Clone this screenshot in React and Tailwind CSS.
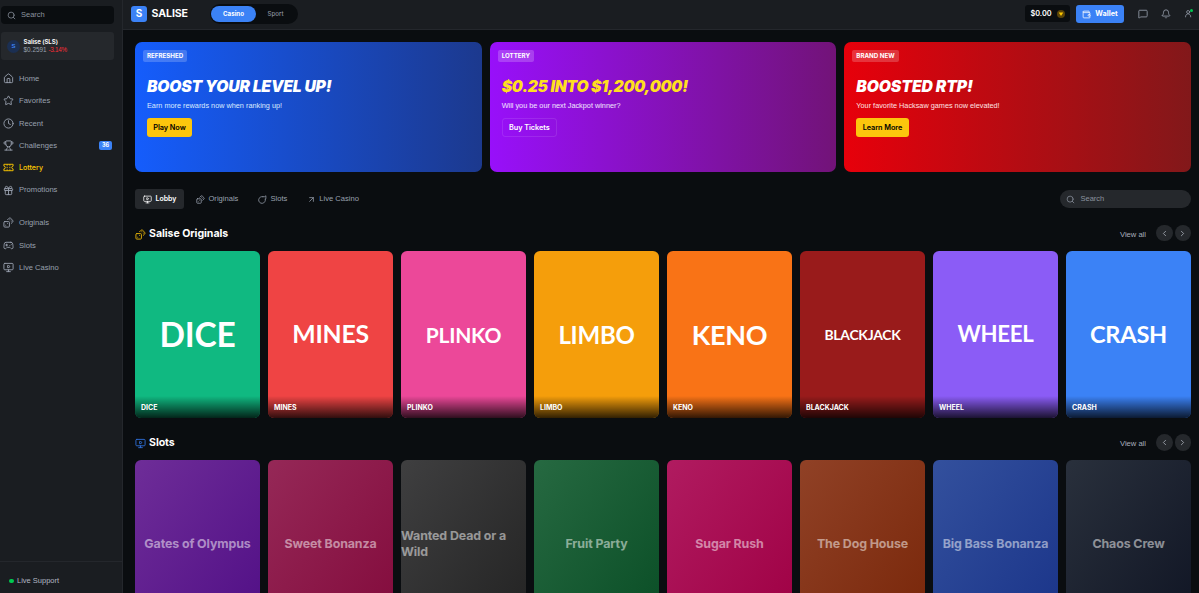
import {
  Bell,
  ChevronLeft,
  ChevronRight,
  Clock,
  Dices,
  Gamepad2,
  Gift,
  House,
  MessageSquare,
  MonitorPlay,
  Search,
  Star,
  Trophy,
  Wallet,
  ArrowUpRight,
} from "lucide-react";

function TicketIcon({ className }) {
  return (
    <svg viewBox="0 0 24 24" fill="none" stroke="currentColor" strokeWidth="2" className={className}>
      <path d="M2 5h20v4a3 3 0 0 0 0 6v4H2v-4a3 3 0 0 0 0-6z" />
      <path d="M9 5v3M9 10.500v3M9 16v3M15 5v3M15 10.500v3M15 16v3" />
    </svg>
  );
}

function CherryIcon({ className }) {
  return (
    <svg viewBox="0 0 24 24" fill="none" stroke="currentColor" strokeWidth="2" strokeLinecap="round" strokeLinejoin="round" className={className}>
      <path d="M13 4.500A9 9 0 1 0 19.500 11" />
      <path d="M13 4.500h5l3-2.500v8l-1.500 1" />
    </svg>
  );
}

function UserIcon({ className }) {
  return (
    <svg viewBox="0 0 24 24" fill="none" stroke="currentColor" strokeWidth="2" strokeLinecap="round" className={className}>
      <circle cx="11" cy="8" r="4" />
      <path d="M4 21c0-5 3-8 7-8s7 3 7 8" />
    </svg>
  );
}

function CoinIcon({ className }) {
  return (
    <svg viewBox="0 0 16 16" className={className}>
      <circle cx="8" cy="8" r="8" fill="#5a4408" />
      <path d="M3.500 5h9L8 12z" fill="#fdc700" />
    </svg>
  );
}

const mainNav = [
  { label: "Home", icon: House },
  { label: "Favorites", icon: Star },
  { label: "Recent", icon: Clock },
  { label: "Challenges", icon: Trophy, badge: "36" },
  { label: "Lottery", icon: TicketIcon, active: true },
  { label: "Promotions", icon: Gift },
];

const gameNav = [
  { label: "Originals", icon: Dices },
  { label: "Slots", icon: Gamepad2 },
  { label: "Live Casino", icon: MonitorPlay },
];

const banners = [
  {
    tag: "REFRESHED",
    title: "BOOST YOUR LEVEL UP!",
    text: "Earn more rewards now when ranking up!",
    button: "Play Now",
    bg: "bg-linear-to-r/srgb from-[#155dfc] to-[#1c398e]",
    titleClass: "text-white tracking-[-0.180px]",
    textClass: "text-blue-100",
    buttonClass: "bg-[#fcc60d] text-black",
  },
  {
    tag: "LOTTERY",
    title: "$0.25 INTO $1,200,000!",
    text: "Will you be our next Jackpot winner?",
    button: "Buy Tickets",
    bg: "bg-linear-to-r/srgb from-[#9810fa] to-[#721378]",
    titleClass: "text-[#ffdf20] tracking-[-0.310px]",
    textClass: "text-purple-100",
    buttonClass: "border border-white/10 text-white",
  },
  {
    tag: "BRAND NEW",
    title: "BOOSTED RTP!",
    text: "Your favorite Hacksaw games now elevated!",
    button: "Learn More",
    bg: "bg-linear-to-r/srgb from-[#e7000b] to-[#82181a]",
    titleClass: "text-white tracking-[-0.100px]",
    textClass: "text-red-100",
    buttonClass: "bg-[#fcc60d] text-black",
  },
];

const originals = [
  { name: "DICE", bg: "bg-[#10b981]", size: "text-[33.500px]" },
  { name: "MINES", bg: "bg-[#ef4444]", size: "text-[24.800px]" },
  { name: "PLINKO", bg: "bg-[#ec4899]", size: "text-[21px]" },
  { name: "LIMBO", bg: "bg-[#f59e0b]", size: "text-[24px]" },
  { name: "KENO", bg: "bg-[#f97316]", size: "text-[27px]" },
  { name: "BLACKJACK", bg: "bg-[#991b1b]", size: "text-[13.900px]" },
  { name: "WHEEL", bg: "bg-[#8b5cf6]", size: "text-[22.200px]" },
  { name: "CRASH", bg: "bg-[#3b82f6]", size: "text-[23.600px]" },
];

const slots = [
  { name: "Gates of Olympus", bg: "from-[#6e2d98] to-[#510f86]" },
  { name: "Sweet Bonanza", bg: "from-[#952857] to-[#830b3c]" },
  { name: "Wanted Dead or a Wild", bg: "from-[#3f3f40] to-[#232323]" },
  { name: "Fruit Party", bg: "from-[#266941] to-[#0a4e26]" },
  { name: "Sugar Rush", bg: "from-[#b01b60] to-[#9f0044]" },
  { name: "The Dog House", bg: "from-[#904126] to-[#79270a]" },
  { name: "Big Bass Bonanza", bg: "from-[#33509d] to-[#1a3489]" },
  { name: "Chaos Crew", bg: "from-[#29303c] to-[#101524]" },
];

const tabs = [
  { label: "Lobby", icon: MonitorPlay, active: true },
  { label: "Originals", icon: Dices },
  { label: "Slots", icon: CherryIcon },
  { label: "Live Casino", icon: ArrowUpRight },
];

function NavItem({ item }) {
  const Icon = item.icon;
  return (
    <a className={`flex h-[22.300px] items-center pr-[10px] pl-[2.500px] ${item.active ? "font-['Inter'] text-[7.100px] font-medium text-[#fdc700]" : "text-[7.600px] text-[#99a1af]"}`}>
      <Icon className="mr-[5.500px] size-[11px]" />
      <span>{item.label}</span>
      {item.badge && (
        <span className="ml-auto flex h-[9px] w-[13px] items-center justify-center rounded-[2px] bg-[#3b82f6] font-['Inter'] text-[5.500px] font-bold text-white">
          {item.badge}
        </span>
      )}
    </a>
  );
}

function Sidebar() {
  return (
    <aside className="flex w-[123px] shrink-0 flex-col border-r border-[#24272c] bg-[#1a1d21] font-['Liberation_Sans',sans-serif]">
      <div className="mt-[6px] ml-[1px] flex h-[18px] w-[113px] items-center rounded-[4px] bg-[#0a0d10] pl-[6px] text-[7.500px] text-[#8b929e]">
        <Search className="mr-[5px] size-[9px]" />
        Search
      </div>
      <div className="mt-[8px] ml-[1px] flex h-[28px] w-[113px] items-center rounded-[3px] bg-[#25282c] pl-[6px]">
        <div className="flex size-[13px] items-center justify-center rounded-full bg-[#1b2f52] text-[6px] font-bold text-[#3b82f6]">S</div>
        <div className="ml-[3.500px] text-[6.400px] leading-[8px]">
          <div className="font-['Inter'] text-[6.200px] font-semibold tracking-[-0.100px] text-white">Salise (SLS)</div>
          <div className="text-[#99a1af]">
            $0.2591 <span className="text-[6.300px] tracking-[-0.250px] text-[#fb2c36]">-3.14%</span>
          </div>
        </div>
      </div>
      <nav className="mt-[7.500px] flex flex-col">
        {mainNav.map((item) => (
          <NavItem key={item.label} item={item} />
        ))}
      </nav>
      <nav className="mt-[10.500px] flex flex-col">
        {gameNav.map((item) => (
          <NavItem key={item.label} item={item} />
        ))}
      </nav>
      <div className="mt-auto flex h-[32px] items-center border-t border-[#24272c] pt-[7px] pl-[9px] text-[7.500px] text-[#b1b7c2]">
        <span className="mr-[3.500px] size-[4.500px] rounded-full bg-[#00c950]" />
        Live Support
      </div>
    </aside>
  );
}

function Header() {
  return (
    <header className="flex h-[30px] shrink-0 items-center border-b border-[#24272c] bg-[#1a1d21] pr-[6px] pb-[2px] pl-[8px]">
      <div className="flex size-[16px] items-center justify-center rounded-[3px] bg-[#3b82f6] text-[10px] font-bold text-white">S</div>
      <div className="ml-[4.500px] w-[58.500px] text-[10.600px] font-bold tracking-[-0.100px] text-white">SALISE</div>
      <div className="flex h-[20px] w-[88px] items-center rounded-full bg-[#0a0d10] px-[1px] text-[6.200px]">
        <div className="flex h-[16px] w-[45px] items-center justify-center rounded-full bg-[#3b82f6] font-bold text-white">Casino</div>
        <div className="flex-1 pr-[2px] text-center font-medium text-[#8b929e]">Sport</div>
      </div>
      <div className="ml-auto flex h-[17px] w-[45px] items-center justify-center gap-[5px] rounded-[3px] bg-[#0a0d10] pt-[1px] text-[7.300px] font-semibold text-white">
        $0.00
        <CoinIcon className="size-[8px]" />
      </div>
      <div className="ml-[6px] flex h-[18px] w-[48px] items-center justify-center gap-[4px] rounded-[3px] bg-[#3b82f6] pt-[1px] text-[7.300px] font-bold text-white">
        <Wallet className="size-[9px]" />
        Wallet
      </div>
      <div className="ml-[14px] flex items-center gap-[13px] text-[#99a1af]">
        <MessageSquare className="size-[10px]" />
        <Bell className="size-[10px]" />
        <div className="relative">
          <UserIcon className="size-[9px]" />
          <span className="absolute top-0 right-0 size-[3px] rounded-full bg-[#00c950]" />
        </div>
      </div>
    </header>
  );
}

function Banner({ banner }) {
  return (
    <article className={`relative h-[130px] rounded-[7px] pt-[36px] pl-[12px] ${banner.bg}`}>
      <span className="absolute top-[8px] left-[8px] flex h-[12px] items-center rounded-[2px] bg-white/20 px-[4px] text-[6.200px] font-bold text-white">
        {banner.tag}
      </span>
      <h2 className={`text-[15.700px] leading-[18px] font-black whitespace-nowrap italic ${banner.titleClass}`}>{banner.title}</h2>
      <p className={`mt-[4.500px] font-['Liberation_Sans',sans-serif] text-[7.300px] leading-[10px] ${banner.textClass}`}>{banner.text}</p>
      <button className={`mt-[7.500px] flex h-[19px] items-center rounded-[3px] px-[6.300px] pt-[1px] text-[7.300px] font-semibold tracking-[-0.050px] ${banner.buttonClass}`}>
        {banner.button}
      </button>
    </article>
  );
}

function SectionHeader({ title, icon: Icon, iconClass }) {
  return (
    <div className="flex h-[18px] items-center">
      <Icon className={`mt-[2px] -ml-[0.500px] size-[11px] ${iconClass}`} />
      <h3 className="mt-[2px] ml-[3.500px] text-[10.600px] font-bold tracking-[-0.060px] text-white">{title}</h3>
      <span className="mt-[3px] ml-auto font-['Liberation_Sans',sans-serif] text-[7.600px] text-[#a9b0bd]">View all</span>
      <div className="ml-[10px] flex gap-[2px] text-[#b1b7c2]">
        <button className="flex size-[16.500px] items-center justify-center rounded-full bg-[#25282c]">
          <ChevronLeft className="size-[9px]" />
        </button>
        <button className="flex size-[16.500px] items-center justify-center rounded-full bg-[#25282c]">
          <ChevronRight className="size-[9px]" />
        </button>
      </div>
    </div>
  );
}

export default function App() {
  return (
    <div className="flex h-screen overflow-hidden bg-[#0a0d10] font-['Inter','Liberation_Sans',sans-serif]">
      <Sidebar />
      <div className="flex min-w-0 flex-1 flex-col">
        <Header />
        <main className="flex-1 overflow-hidden pt-[12px] pr-[8px] pl-[12px]">
          <section className="grid grid-cols-3 gap-[8px]">
            {banners.map((banner) => (
              <Banner key={banner.tag} banner={banner} />
            ))}
          </section>

          <div className="mt-[17px] flex h-[20px] items-center justify-between">
            <div className="flex h-full">
              {tabs.map(({ label, icon: Icon, active }) => (
                <button
                  key={label}
                  className={`mr-[4px] flex h-full items-center gap-[3.500px] rounded-[3px] pr-[7.500px] pl-[8px] ${active ? "bg-[#25282c] text-[7px] font-semibold text-white" : "font-['Liberation_Sans',sans-serif] text-[7.600px] text-[#99a1af]"}`}
                >
                  <Icon className="size-[9px]" />
                  {label}
                </button>
              ))}
            </div>
            <div className="flex h-[18px] w-[131px] items-center rounded-full bg-[#25282c] pl-[6px] font-['Liberation_Sans',sans-serif] text-[7.500px] text-[#8b929e]">
              <Search className="mr-[5.500px] size-[9px]" />
              Search
            </div>
          </div>

          <section className="mt-[15px]">
            <SectionHeader title="Salise Originals" icon={Dices} iconClass="text-[#e5b30a]" />
            <div className="mt-[9.300px] grid grid-cols-8 gap-[8px]">
              {originals.map((game) => (
                <article key={game.name} className={`relative flex h-[166.600px] items-center justify-center overflow-hidden rounded-[6px] ${game.bg}`}>
                  <span className={`font-['Lato',sans-serif] leading-none font-bold tracking-[-0.250px] text-white ${game.size}`}>{game.name}</span>
                  <div className="absolute inset-x-0 bottom-0 flex h-[22px] items-center bg-linear-to-t/srgb from-black/80 to-transparent pt-[2px] pl-[6px] text-[7px] font-bold text-white">
                    {game.name}
                  </div>
                </article>
              ))}
            </div>
          </section>

          <section className="mt-[15.400px]">
            <SectionHeader title="Slots" icon={MonitorPlay} iconClass="text-[#2f6fd6]" />
            <div className="mt-[9px] grid grid-cols-8 gap-[8px]">
              {slots.map((game) => (
                <article key={game.name} className={`flex h-[166.600px] items-center justify-center rounded-[6px] bg-linear-to-br/srgb ${game.bg}`}>
                  <span className="text-[12.400px] leading-[16px] font-bold tracking-[-0.100px] text-white/50">{game.name}</span>
                </article>
              ))}
            </div>
          </section>
        </main>
      </div>
    </div>
  );
}
